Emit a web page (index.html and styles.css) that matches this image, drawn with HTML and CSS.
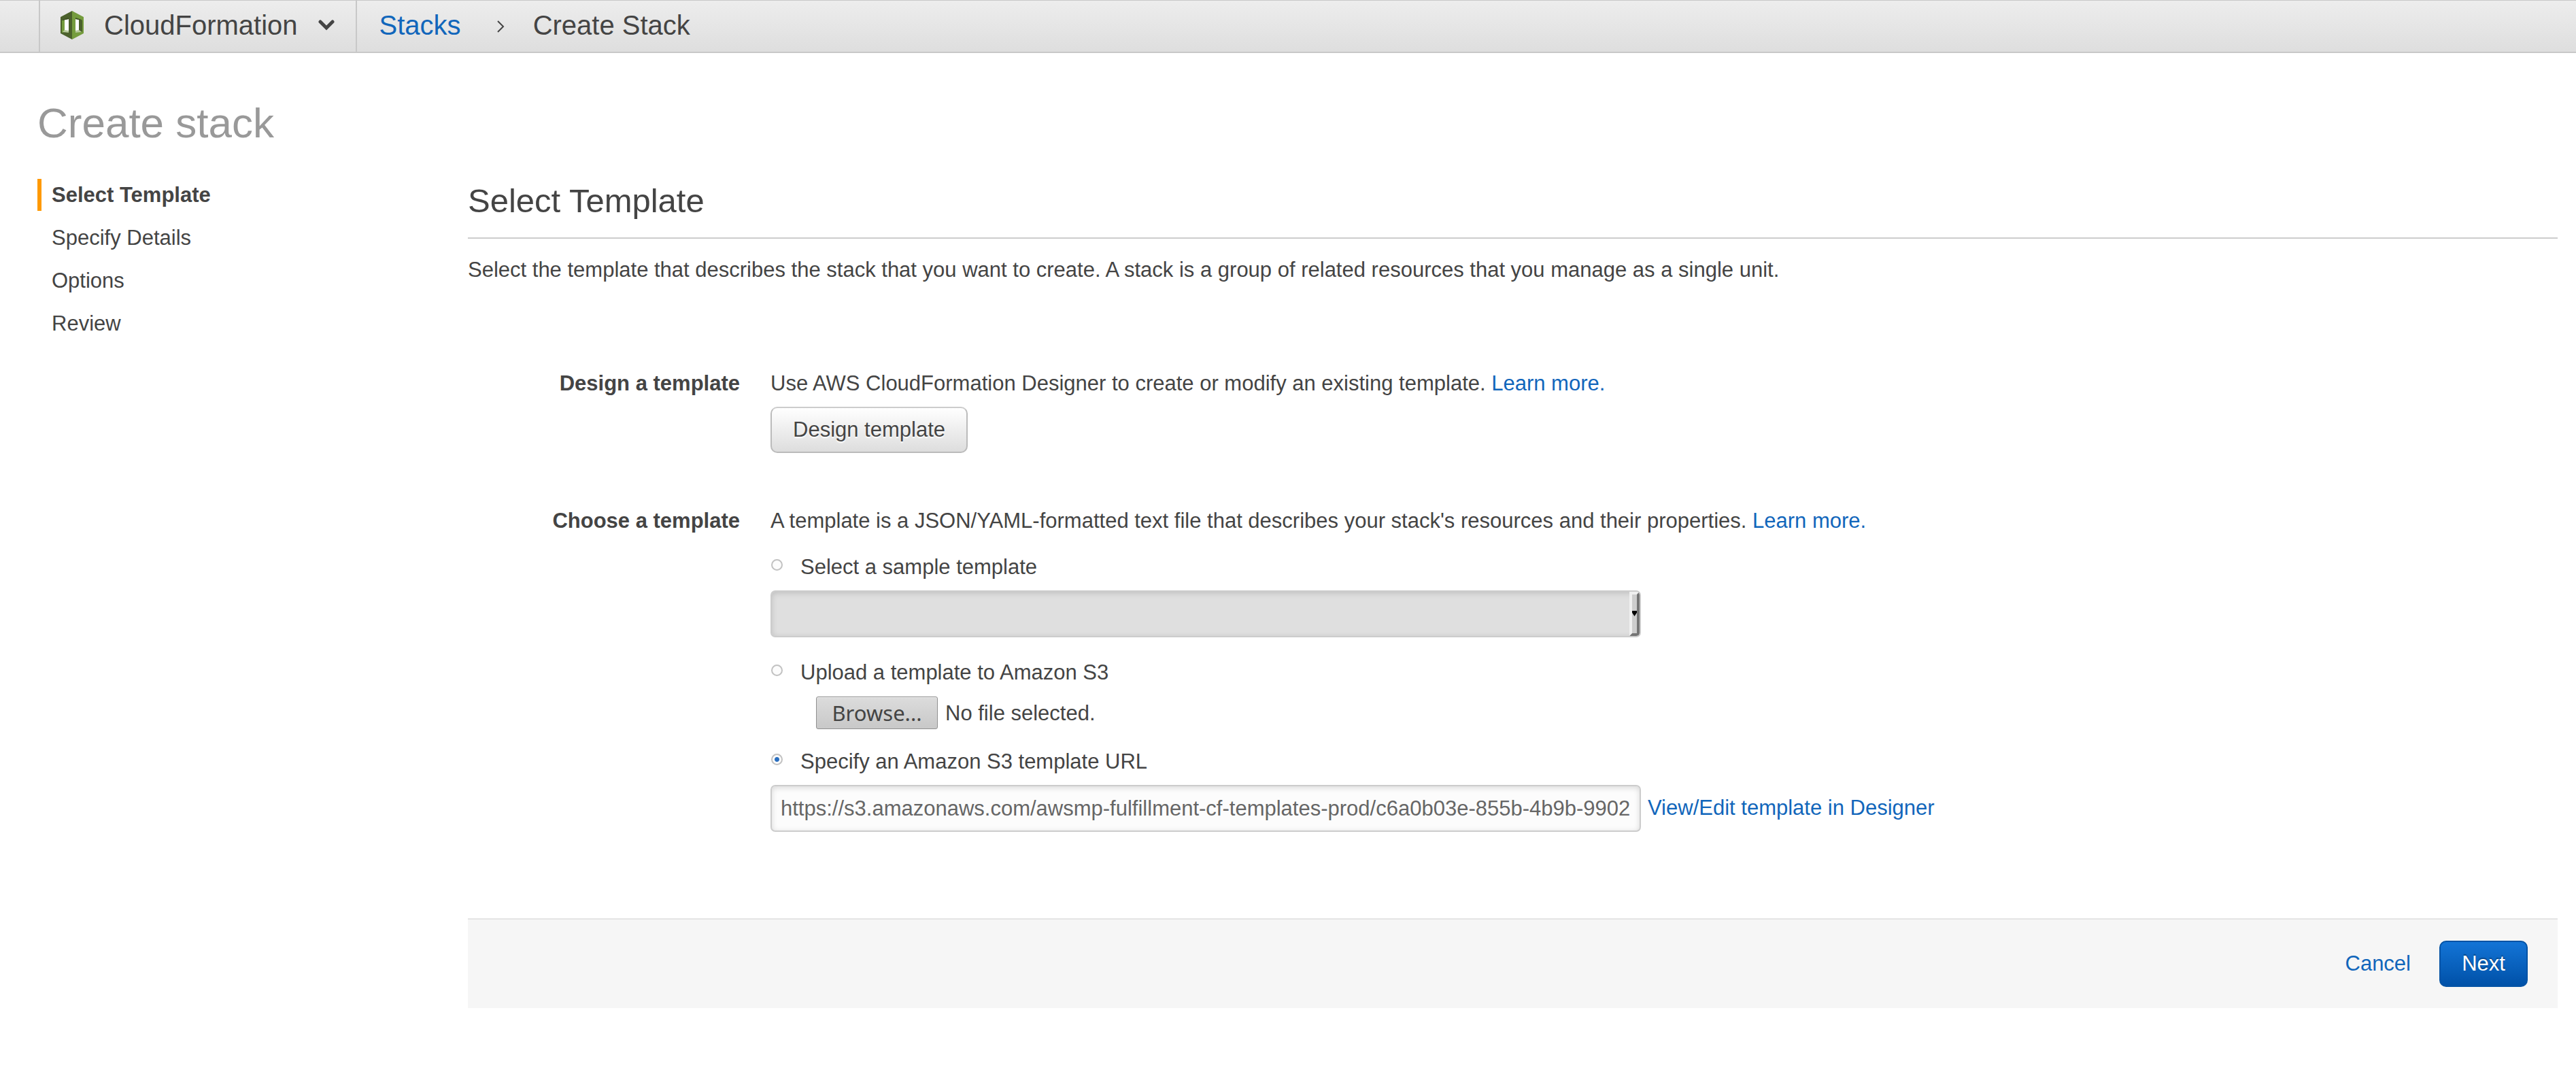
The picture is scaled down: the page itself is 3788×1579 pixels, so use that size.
FILE: index.html
```html
<!DOCTYPE html>
<html lang="en">
<head>
<meta charset="utf-8">
<title>Create Stack</title>
<link rel="stylesheet" href="styles.css">
</head>
<body>
<header class="topbar">
  <button class="service" type="button">
    <svg class="service-icon" viewBox="0 0 34 42" aria-hidden="true">
      <path fill="#4b612c" d="M17 0 0 9v24l17 9z"/>
      <path fill="#759c3e" d="M17 0l17 9v24l-17 9z"/>
      <path fill="#759c3e" d="M2 14l5-1v18l-5 1z"/>
      <path fill="#fff" d="M6 13l6-1v18l-6-1z"/>
      <path fill="#3c4f22" d="M3 13l9-3v2l-9 2z"/>
      <path fill="#b7ca9d" d="M3 31l3-3 6 1v3z"/>
      <path fill="#4b612c" d="M32 14l-5-1v16l5 2z"/>
      <path fill="#fff" d="M22 12l5 1v16l-5 1z"/>
      <path fill="#3c4f22" d="M31 13l-9-3v2l9 2z"/>
      <path fill="#b7ca9d" d="M31 31l-4-3-5 1v3z"/>
    </svg>
    <span>CloudFormation</span>
    <svg class="service-caret" viewBox="0 0 24 16" aria-hidden="true"><path d="M3 3l9 9 9-9" fill="none" stroke="#444" stroke-width="5" stroke-linecap="round"/></svg>
  </button>
  <nav class="crumbs" aria-label="Breadcrumb">
    <a href="#">Stacks</a>
    <svg class="crumb-arrow" viewBox="0 0 12 18" aria-hidden="true"><path d="M2 1l8 8-8 8" fill="none" stroke="#444" stroke-width="2"/></svg>
    <span>Create Stack</span>
  </nav>
</header>
<div class="page">
  <h1>Create stack</h1>
  <div class="columns">
    <ol class="steps">
      <li class="current">Select Template</li>
      <li>Specify Details</li>
      <li>Options</li>
      <li>Review</li>
    </ol>
    <main>
      <h2>Select Template</h2>
      <p class="intro">Select the template that describes the stack that you want to create. A stack is a group of related resources that you manage as a single unit.</p>
      <form>
        <section class="row">
          <h3>Design a template</h3>
          <div>
            <p>Use AWS CloudFormation Designer to create or modify an existing template. <a href="#">Learn more.</a></p>
            <button class="btn design" type="button">Design template</button>
          </div>
        </section>
        <section class="row">
          <h3>Choose a template</h3>
          <div>
            <p>A template is a JSON/YAML-formatted text file that describes your stack's resources and their properties. <a href="#">Learn more.</a></p>
            <label class="choice first"><input type="radio" name="source">Select a sample template</label>
            <div class="select-wrap">
              <select class="field" aria-label="Sample template" disabled><option></option></select>
              <span class="select-arrow"></span>
            </div>
            <label class="choice upload"><input type="radio" name="source">Upload a template to Amazon S3</label>
            <div class="file">
              <input class="file-input" id="file" type="file">
              <label class="browse" for="file">Browse...</label>
              <span>No file selected.</span>
            </div>
            <label class="choice url"><input type="radio" name="source" checked>Specify an Amazon S3 template URL</label>
            <div class="url-line">
              <input class="field" type="text" aria-label="Template URL" value="https://s3.amazonaws.com/awsmp-fulfillment-cf-templates-prod/c6a0b03e-855b-4b9b-9902-">
              <a href="#">View/Edit template in Designer</a>
            </div>
          </div>
        </section>
        <footer class="actions">
          <a href="#">Cancel</a>
          <button class="btn primary" type="submit">Next</button>
        </footer>
      </form>
    </main>
  </div>
</div>
</body>
</html>
```
FILE: styles.css
```css
* { box-sizing: border-box; }
body {
  margin: 0;
  background: #fff;
  color: #444;
  font: 31px/47px "Liberation Sans", Arial, sans-serif;
}
h1, h2, h3, p, ol { margin: 0; padding: 0; }
a { color: #16b; text-decoration: none; }
button, input, select { font: inherit; color: inherit; }

.topbar {
  display: flex;
  height: 78px;
  padding-left: 57px;
  border-top: 1px solid #c8c8c8;
  border-bottom: 2px solid #c8c8c8;
  background: linear-gradient(#ededed, #dedede);
  font-size: 40px;
}
.service {
  display: flex;
  align-items: center;
  padding: 0 31px 3px 30px;
  border: 0 solid #c8c8c8;
  border-width: 0 2px;
  background: none;
}
.service-icon { width: 34px; height: 42px; margin-right: 30px; }
.service-caret { width: 24px; height: 16px; margin-left: 30px; }
.crumbs { display: flex; align-items: center; padding: 0 0 3px 33px; }
.crumb-arrow { width: 12px; height: 18px; margin: 4px 42px 0 52px; }

.page { padding: 67px 27px 97px 55px; }
h1 { color: #999; font-size: 62px; font-weight: 400; line-height: 72px; }
.columns {
  display: grid;
  grid-template-columns: 633px 1fr;
  align-items: start;
  margin-top: 46px;
}
.steps { display: grid; gap: 16px; list-style: none; }
.steps li { padding-left: 15px; border-left: 6px solid transparent; }
.steps .current { border-color: #f90; font-weight: 700; }

h2 {
  margin-top: 2px;
  padding-bottom: 24px;
  border-bottom: 2px solid #ccc;
  font-size: 49px;
  font-weight: 400;
  line-height: 60px;
}
.intro { margin: 22px 0 120px; }
.row {
  display: grid;
  grid-template-columns: 400px 1fr;
  gap: 45px;
  margin-bottom: 76px;
}
h3 { font-size: 31px; text-align: right; }

.btn {
  height: 68px;
  padding: 0 31px 2px;
  border: 2px solid #bbb;
  border-radius: 10px;
  line-height: 47px;
}
.design {
  display: block;
  margin-top: 11px;
  border-top-color: #ccc;
  background: linear-gradient(#fff, #ddd);
  text-shadow: 0 2px 2px #fff;
}

.choice { display: flex; align-items: center; width: fit-content; }
.first { margin-top: 21px; }
.upload { margin-top: 28px; }
.url { margin-top: 24px; }
.choice input {
  appearance: none;
  width: 17px;
  height: 17px;
  margin: 0 26px 6px 1px;
  border: 2px solid #c2c2c2;
  border-radius: 50%;
  background: #fcfcfc;
}
.choice input:checked { background: radial-gradient(circle, #2a6fc0 3px, #fcfcfc 4px); }

.field {
  display: block;
  width: 1280px;
  height: 69px;
  padding: 0 13px;
  border: 2px solid #ccc;
  border-radius: 7px;
  background: #fcfcfc;
  box-shadow: inset 0 2px 8px rgba(0, 0, 0, .15);
  color: #666;
}
.select-wrap { position: relative; width: 1280px; margin-top: 11px; }
.select-wrap .field { appearance: none; background: #dfdfdf; opacity: 1; }
.select-arrow {
  position: absolute;
  top: 2px;
  right: 2px;
  bottom: 2px;
  width: 15px;
  border: 4px solid;
  border-color: #f0f0f0 #757575 #757575 #f0f0f0;
  border-radius: 0 5px 5px 0;
  background: #cdcdcd;
  pointer-events: none;
}
.select-arrow::after {
  content: "";
  display: block;
  height: 8px;
  margin-top: 24px;
  background: #000;
  clip-path: polygon(0 0, 100% 0, 100% 35%, 50% 100%, 0 35%);
}

.file { display: flex; align-items: center; gap: 11px; margin: 12px 0 0 67px; }
.file-input { position: absolute; width: 1px; height: 1px; opacity: 0; }
.browse {
  width: 179px;
  height: 48px;
  border: 1px solid #909090;
  border-radius: 3px;
  background: linear-gradient(#dcdcdc, #c8c8c8);
  box-shadow: inset 0 1px #eee;
  font-family: "Noto Sans", "Open Sans", sans-serif;
  line-height: 46px;
  text-align: center;
}
.url-line { display: flex; align-items: center; gap: 10px; margin-top: 11px; }
.url-line a { padding-bottom: 3px; }

.actions {
  display: flex;
  align-items: center;
  justify-content: flex-end;
  gap: 42px;
  height: 132px;
  margin-top: 127px;
  padding-right: 44px;
  border-top: 2px solid #e4e4e4;
  background: #f6f6f6;
}
.actions a { padding-bottom: 2px; }
.primary {
  width: 130px;
  border-color: #0353a5;
  background: linear-gradient(#1374d6, #0051a8);
  color: #fff;
  text-shadow: 0 -2px 1px rgba(0, 0, 0, .3);
}
```
